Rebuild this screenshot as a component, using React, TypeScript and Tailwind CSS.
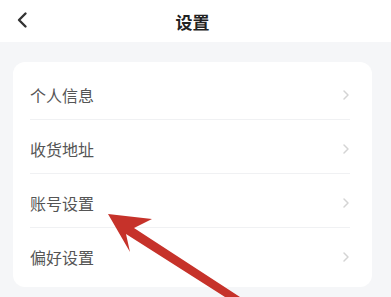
import React from "react";

const items = ["个人信息", "收货地址", "账号设置", "偏好设置"];

export default function App() {
  return (
    <div
      className="relative w-[391px] h-[297px] overflow-hidden bg-[#f5f6f8]"
      style={{ fontFamily: '"Noto Sans CJK SC", "Noto Sans", sans-serif' }}
    >
      <div className="h-[42px] bg-white flex items-center relative">
        <div className="absolute left-[15px] top-[11px]">
          <svg width="14" height="18" viewBox="0 0 14 18">
            <path d="M10.5 2.5 L4 9 L10.5 15.5" fill="none" stroke="#333" strokeWidth="2.4" strokeLinecap="round" strokeLinejoin="round" />
          </svg>
        </div>
        <div className="flex-1 text-center text-[17px] font-bold text-[#222] leading-none pr-[6px]">设置</div>
      </div>
      <div className="pt-[20px] px-[13px] pr-[19px]">
        <div className="bg-white rounded-[12px] pt-[4px] pb-[5px]">
          {items.map((t, i) => (
            <div key={t} className="pl-[17px] pr-[22px]">
              <div
                className={
                  "h-[54px] flex items-center justify-between pt-[4px] " +
                  (i < items.length - 1 ? "border-b border-[#f0f1f3]" : "")
                }
              >
                <span className="text-[16px] text-[#555] leading-none">{t}</span>
                <svg width="8" height="12" viewBox="0 0 8 12">
                  <path d="M2 2 L6 6 L2 10" fill="none" stroke="#d4d4d4" strokeWidth="1.5" strokeLinecap="round" strokeLinejoin="round" />
                </svg>
              </div>
            </div>
          ))}
        </div>
      </div>
      <svg className="absolute left-0 top-0 pointer-events-none" width="391" height="297" viewBox="0 0 391 297">
        <polygon
          points="108,214 152,219 134,228 240,297 225,297 126,234 130,252"
          fill="#c6322a"
        />
      </svg>
    </div>
  );
}
